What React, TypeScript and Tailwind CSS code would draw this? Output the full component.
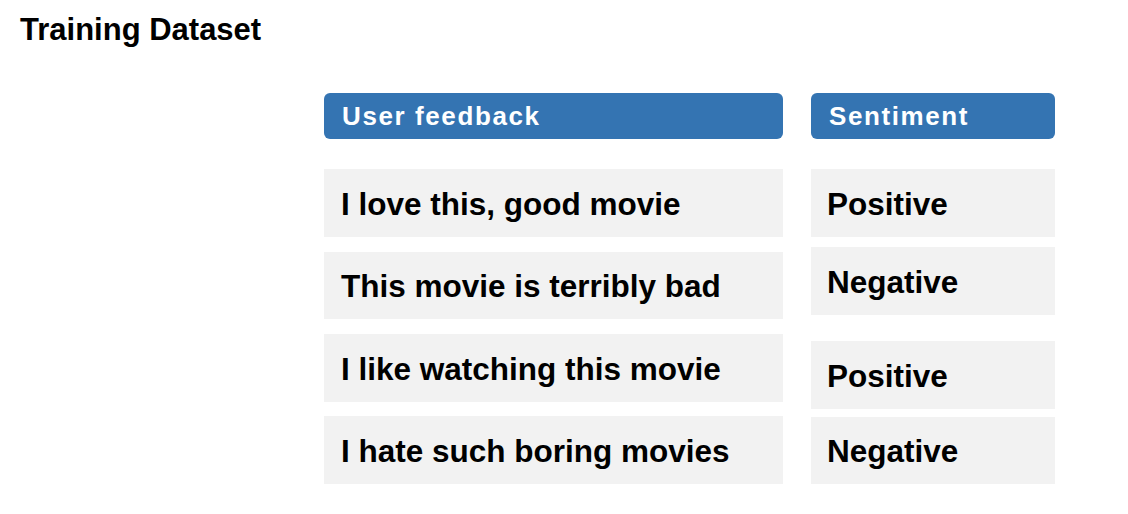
const font = { fontFamily: '"Liberation Sans", Arial, sans-serif' };

interface Cell {
  readonly text: string;
  readonly gap: string;
  readonly height: string;
}

const feedback: readonly Cell[] = [
  { text: "I love this, good movie", gap: "mt-[30px]", height: "h-[68px]" },
  { text: "This movie is terribly bad", gap: "mt-[15px]", height: "h-[67px]" },
  { text: "I like watching this movie", gap: "mt-[15px]", height: "h-[68px]" },
  { text: "I hate such boring movies", gap: "mt-[14px]", height: "h-[68px]" },
];

const sentiment: readonly Cell[] = [
  { text: "Positive", gap: "mt-[30px]", height: "h-[68px]" },
  { text: "Negative", gap: "mt-[10px]", height: "h-[68px]" },
  { text: "Positive", gap: "mt-[26px]", height: "h-[68px]" },
  { text: "Negative", gap: "mt-[8px]", height: "h-[67px]" },
];

function Column({
  title,
  cells,
  width,
  pad,
}: {
  readonly title: string;
  readonly cells: readonly Cell[];
  readonly width: string;
  readonly pad: string;
}) {
  return (
    <div className={`flex flex-col ${width}`}>
      {/* 表头 */}
      <div className="flex h-[46px] items-center rounded-md bg-[#3474b2] pl-[18px]">
        <span className="text-[26px] font-bold leading-none tracking-[1.6px] text-white">
          {title}
        </span>
      </div>

      {cells.map((cell, i) => (
        <div
          key={`${title}-${i}`}
          className={`flex items-center bg-[#f2f2f2] pt-[3px] ${pad} ${cell.gap} ${cell.height}`}
        >
          <span className="text-[31.5px] font-bold leading-none text-black">
            {cell.text}
          </span>
        </div>
      ))}
    </div>
  );
}

export default function App() {
  return (
    <div className="h-[514px] w-[1128px] bg-white" style={font}>
      <div className="px-[20px] pt-[15px]">
        <h1 className="text-[31px] font-bold leading-[30px] text-black">
          Training Dataset
        </h1>
      </div>

      <div className="mt-[48px] flex gap-[28px] pl-[324px]">
        <Column
          title="User feedback"
          cells={feedback}
          width="w-[459px]"
          pad="pl-[17px]"
        />
        <Column
          title="Sentiment"
          cells={sentiment}
          width="w-[244px]"
          pad="pl-[16px]"
        />
      </div>
    </div>
  );
}
